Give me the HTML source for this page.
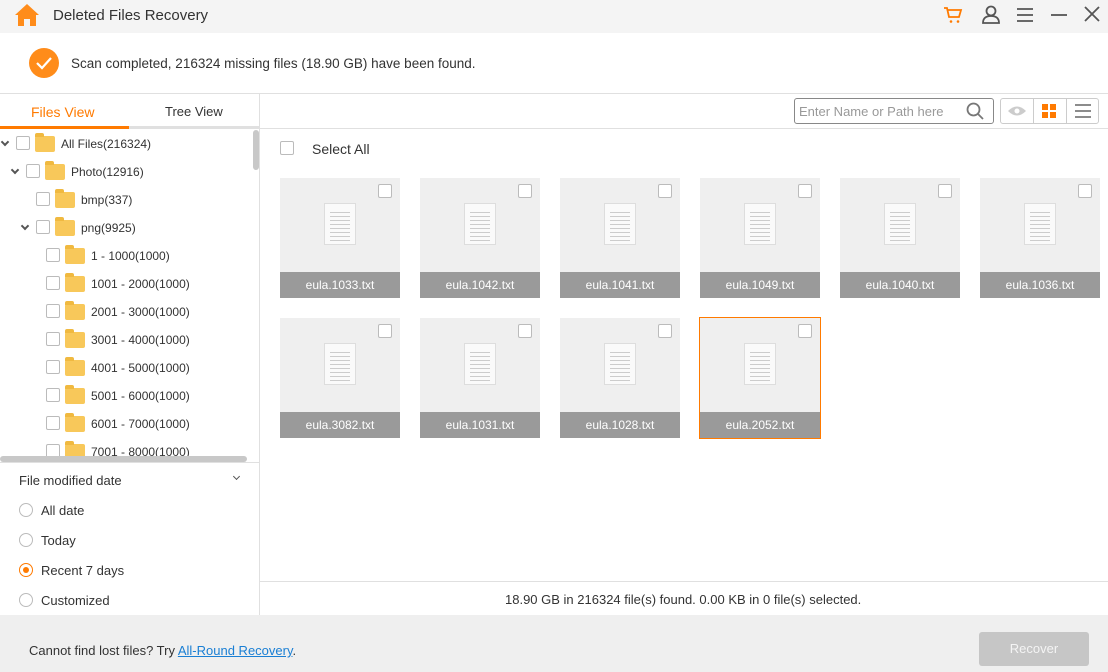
<!DOCTYPE html><html><head><style>
*{box-sizing:border-box;margin:0;padding:0}
body{width:1108px;height:672px;overflow:hidden;font-family:"Liberation Sans",sans-serif;background:#fff;position:relative;color:#333}
.a{position:absolute}
.cb{position:absolute;width:14px;height:14px;border:1px solid #bbb;background:#fff;border-radius:2px}
.fold{position:absolute;width:20px;height:16px;background:#f8c85a;border-radius:2px}
.fold:before{content:"";position:absolute;left:0;top:-3px;width:9px;height:4px;background:#f0b940;border-radius:2px 2px 0 0}
.tx{position:absolute;font-size:12px;color:#333;white-space:nowrap}
.chev{position:absolute;width:6px;height:6px;border-right:2px solid #555;border-bottom:2px solid #555;transform:rotate(45deg)}
.card{position:absolute;width:120px;height:120px;background:#efefef}
.card .lb{position:absolute;left:0;bottom:0;width:100%;height:26px;background:#9a9a9a;color:#fff;font-size:12px;text-align:center;line-height:26px}
.card .cb{right:8px;top:6px;left:auto}
.doc{position:absolute;left:44px;top:25px;width:32px;height:42px;background:#fafafa;border:1px solid #ddd}
.doc i{position:absolute;left:5px;width:20px;height:1px;background:#ccc}
.rad{position:absolute;width:14px;height:14px;border:1px solid #bbb;border-radius:50%}
</style></head><body>
<div class="a" style="left:0;top:0;width:1108px;height:33px;background:#f4f4f4"></div>
<svg class="a" style="left:14px;top:3px" width="26" height="24" viewBox="0 0 26 24"><path d="M13 1L1 12h3v11h6v-7h6v7h6V12h3z" fill="#ff8c1a"/></svg>
<div class="tx" style="left:53px;top:7px;font-size:15px">Deleted Files Recovery</div>
<svg class="a" style="left:943px;top:6px" width="20" height="18" viewBox="0 0 20 18"><path d="M1 2h3l2 9h10l2-7H5" fill="none" stroke="#ff7a00" stroke-width="1.8"/><circle cx="8" cy="15.5" r="1.3" fill="#ff7a00"/><circle cx="15" cy="15.5" r="1.3" fill="#ff7a00"/></svg>
<svg class="a" style="left:981px;top:5px" width="20" height="19" viewBox="0 0 20 19"><circle cx="10" cy="6" r="4.5" fill="none" stroke="#555" stroke-width="1.8"/><path d="M2 18c0-5 3-7 8-7s8 2 8 7z" fill="none" stroke="#555" stroke-width="1.8"/></svg>
<svg class="a" style="left:1016px;top:7px" width="18" height="16"><path d="M1 2h16M1 8h16M1 14h16" stroke="#555" stroke-width="1.8"/></svg>
<svg class="a" style="left:1050px;top:13px" width="18" height="4"><path d="M1 2h16" stroke="#555" stroke-width="1.8"/></svg>
<svg class="a" style="left:1084px;top:6px" width="16" height="16"><path d="M1 1l14 14M15 1L1 15" stroke="#555" stroke-width="1.8"/></svg>
<svg class="a" style="left:28px;top:47px" width="32" height="32"><circle cx="16" cy="16" r="15" fill="#ff8c1a"/><path d="M9 16l5 5 9-10" fill="none" stroke="#fff" stroke-width="2.2"/></svg>
<div class="tx" style="left:71px;top:56px;font-size:13.5px">Scan completed, 216324 missing files (18.90 GB) have been found.</div>
<div class="a" style="left:0;top:93px;width:1108px;height:1px;background:#e0e0e0"></div>
<div class="a" style="left:259px;top:94px;width:1px;height:521px;background:#e0e0e0"></div>
<div class="tx" style="left:31px;top:104px;font-size:14px;color:#ff7a00">Files View</div>
<div class="tx" style="left:165px;top:104px;font-size:13px">Tree View</div>
<div class="a" style="left:0;top:126px;width:129px;height:3px;background:#ff7a00"></div>
<div class="a" style="left:129px;top:126px;width:130px;height:3px;background:#e0e0e0"></div>
<div class="a" style="left:253px;top:130px;width:6px;height:40px;background:#c8c8c8;border-radius:3px"></div>
<div class="chev" style="left:2px;top:139px"></div><div class="cb" style="left:16px;top:136px"></div><div class="fold" style="left:35px;top:136px"></div><div class="tx" style="left:61px;top:137px">All Files(216324)</div>
<div class="chev" style="left:12px;top:167px"></div><div class="cb" style="left:26px;top:164px"></div><div class="fold" style="left:45px;top:164px"></div><div class="tx" style="left:71px;top:165px">Photo(12916)</div>
<div class="cb" style="left:36px;top:192px"></div><div class="fold" style="left:55px;top:192px"></div><div class="tx" style="left:81px;top:193px">bmp(337)</div>
<div class="chev" style="left:22px;top:223px"></div><div class="cb" style="left:36px;top:220px"></div><div class="fold" style="left:55px;top:220px"></div><div class="tx" style="left:81px;top:221px">png(9925)</div>
<div class="cb" style="left:46px;top:248px"></div><div class="fold" style="left:65px;top:248px"></div><div class="tx" style="left:91px;top:249px">1 - 1000(1000)</div>
<div class="cb" style="left:46px;top:276px"></div><div class="fold" style="left:65px;top:276px"></div><div class="tx" style="left:91px;top:277px">1001 - 2000(1000)</div>
<div class="cb" style="left:46px;top:304px"></div><div class="fold" style="left:65px;top:304px"></div><div class="tx" style="left:91px;top:305px">2001 - 3000(1000)</div>
<div class="cb" style="left:46px;top:332px"></div><div class="fold" style="left:65px;top:332px"></div><div class="tx" style="left:91px;top:333px">3001 - 4000(1000)</div>
<div class="cb" style="left:46px;top:360px"></div><div class="fold" style="left:65px;top:360px"></div><div class="tx" style="left:91px;top:361px">4001 - 5000(1000)</div>
<div class="cb" style="left:46px;top:388px"></div><div class="fold" style="left:65px;top:388px"></div><div class="tx" style="left:91px;top:389px">5001 - 6000(1000)</div>
<div class="cb" style="left:46px;top:416px"></div><div class="fold" style="left:65px;top:416px"></div><div class="tx" style="left:91px;top:417px">6001 - 7000(1000)</div>
<div class="a" style="left:0;top:441px;width:259px;height:15px;overflow:hidden"><div class="cb" style="left:46px;top:3px"></div><div class="fold" style="left:65px;top:3px"></div><div class="tx" style="left:91px;top:4px">7001 - 8000(1000)</div></div>
<div class="a" style="left:0;top:456px;width:247px;height:6px;background:#c8c8c8;border-radius:3px"></div>
<div class="a" style="left:0;top:462px;width:259px;height:1px;background:#e0e0e0"></div>
<div class="tx" style="left:19px;top:473px;font-size:13px">File modified date</div>
<div class="chev" style="left:234px;top:474px;width:5px;height:5px;border-width:1.5px"></div>
<div class="rad" style="left:19px;top:503px"></div><div class="tx" style="left:41px;top:503px;font-size:13px">All date</div>
<div class="rad" style="left:19px;top:533px"></div><div class="tx" style="left:41px;top:533px;font-size:13px">Today</div>
<div class="rad" style="left:19px;top:563px;border-color:#ff7a00"><div class="a" style="left:3px;top:3px;width:6px;height:6px;border-radius:50%;background:#ff7a00"></div></div><div class="tx" style="left:41px;top:563px;font-size:13px">Recent 7 days</div>
<div class="rad" style="left:19px;top:593px"></div><div class="tx" style="left:41px;top:593px;font-size:13px">Customized</div>
<div class="a" style="left:794px;top:98px;width:200px;height:26px;border:1px solid #888;border-radius:3px"></div>
<div class="tx" style="left:799px;top:104px;font-size:13px;color:#999">Enter Name or Path here</div>
<svg class="a" style="left:966px;top:102px" width="18" height="18"><circle cx="7.5" cy="7.5" r="6" fill="none" stroke="#777" stroke-width="1.8"/><path d="M12 12l5 5" stroke="#777" stroke-width="1.8"/></svg>
<div class="a" style="left:1000px;top:98px;width:99px;height:26px;border:1px solid #ccc;border-radius:3px"></div>
<div class="a" style="left:1033px;top:99px;width:1px;height:24px;background:#ccc"></div>
<div class="a" style="left:1066px;top:99px;width:1px;height:24px;background:#ccc"></div>
<svg class="a" style="left:1007px;top:105px" width="20" height="12"><path d="M1 6Q10-3 19 6Q10 15 1 6z" fill="#ccc"/><circle cx="10" cy="6" r="2.5" fill="#fff"/></svg>
<svg class="a" style="left:1042px;top:104px" width="14" height="14"><rect x="0" y="0" width="6" height="6" fill="#ff7a00"/><rect x="8" y="0" width="6" height="6" fill="#ff7a00"/><rect x="0" y="8" width="6" height="6" fill="#ff7a00"/><rect x="8" y="8" width="6" height="6" fill="#ff7a00"/></svg>
<svg class="a" style="left:1075px;top:104px" width="16" height="14"><path d="M0 1h16M0 7h16M0 13h16" stroke="#666" stroke-width="1.6"/></svg>
<div class="a" style="left:260px;top:128px;width:848px;height:1px;background:#e0e0e0"></div>
<div class="cb" style="left:280px;top:141px"></div>
<div class="tx" style="left:312px;top:141px;font-size:14px">Select All</div>
<div id="cards"></div>
<div class="a" style="left:260px;top:581px;width:848px;height:1px;background:#e0e0e0"></div>
<div class="tx" style="left:505px;top:592px;font-size:13px">18.90 GB in 216324 file(s) found. 0.00 KB in 0 file(s) selected.</div>
<div class="a" style="left:0;top:615px;width:1108px;height:57px;background:#efefef"></div>
<div class="tx" style="left:29px;top:643px;font-size:13px">Cannot find lost files? Try <span style="color:#1a7fd4;text-decoration:underline">All-Round Recovery</span>.</div>
<div class="a" style="left:979px;top:632px;width:110px;height:34px;background:#c6c6c6;border-radius:3px;color:#f4f4f4;font-size:13px;text-align:center;line-height:34px">Recover</div>
<script>
var n=["1033","1042","1041","1049","1040","1036","3082","1031","1028","2052"],h="";
n.forEach(function(v,i){var x=280+140*(i%6),y=178+140*Math.floor(i/6);
var d="";for(var k=0;k<8;k++)d+='<i style="top:'+(8+k*4)+'px"></i>';
h+='<div class="card" style="left:'+x+'px;top:'+y+'px;'+(v=="2052"?'outline:1px solid #ff7a00;':'')+'"><div class="doc">'+d+'</div><div class="cb"></div><div class="lb">eula.'+v+'.txt</div></div>';});
document.getElementById("cards").innerHTML=h;
</script>
</body></html>
